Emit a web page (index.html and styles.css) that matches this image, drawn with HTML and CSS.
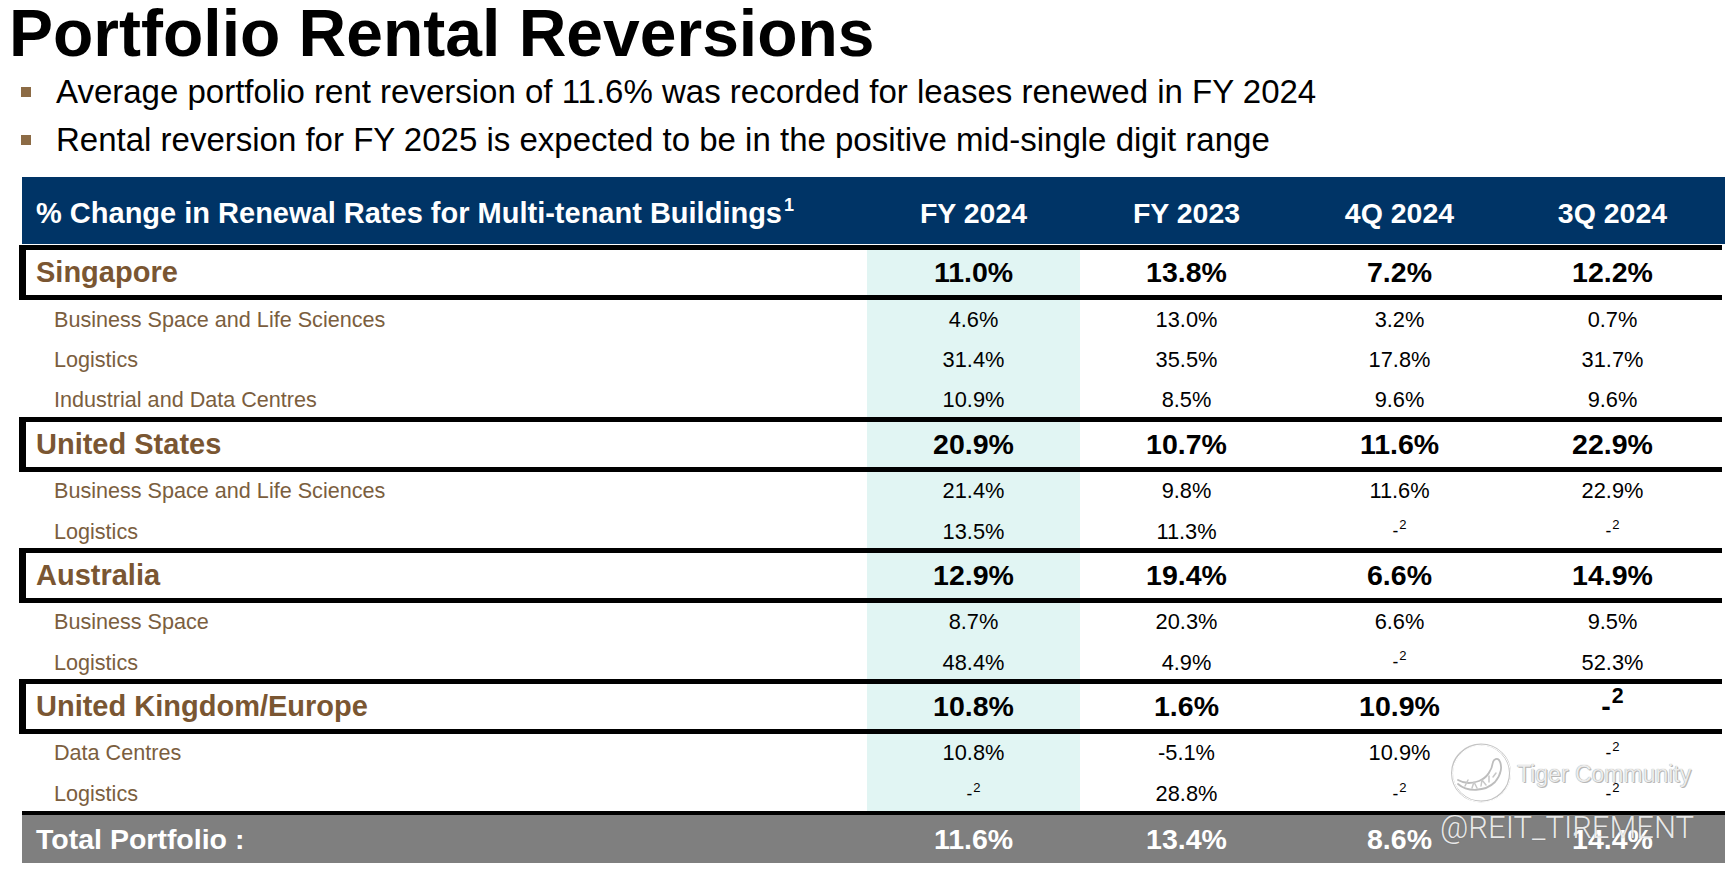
FILE: index.html
```html
<!DOCTYPE html>
<html lang="en">
<head>
<meta charset="utf-8">
<title>Portfolio Rental Reversions</title>
<link rel="stylesheet" href="styles.css">
</head>
<body>
<div class="slide">
  <h1 class="title">Portfolio Rental Reversions</h1>
  <ul class="bullets">
    <li>Average portfolio rent reversion of 11.6% was recorded for leases renewed in FY 2024</li>
    <li>Rental reversion for FY 2025 is expected to be in the positive mid-single digit range</li>
  </ul>

  <div class="table">
    <div class="row head">
      <div class="label">% Change in Renewal Rates for Multi-tenant Buildings<sup>1</sup></div>
      <div class="num">FY 2024</div>
      <div class="num">FY 2023</div>
      <div class="num">4Q 2024</div>
      <div class="num">3Q 2024</div>
    </div>

    <div class="row region">
      <div class="label">Singapore</div>
      <div class="num hl">11.0%</div><div class="num">13.8%</div><div class="num">7.2%</div><div class="num">12.2%</div>
    </div>
    <div class="row sub tall">
      <div class="label">Business Space and Life Sciences</div>
      <div class="num hl">4.6%</div><div class="num">13.0%</div><div class="num">3.2%</div><div class="num">0.7%</div>
    </div>
    <div class="row sub tall mid">
      <div class="label">Logistics</div>
      <div class="num hl">31.4%</div><div class="num">35.5%</div><div class="num">17.8%</div><div class="num">31.7%</div>
    </div>
    <div class="row sub tall last">
      <div class="label">Industrial and Data Centres</div>
      <div class="num hl">10.9%</div><div class="num">8.5%</div><div class="num">9.6%</div><div class="num">9.6%</div>
    </div>

    <div class="row region">
      <div class="label">United States</div>
      <div class="num hl">20.9%</div><div class="num">10.7%</div><div class="num">11.6%</div><div class="num">22.9%</div>
    </div>
    <div class="row sub">
      <div class="label">Business Space and Life Sciences</div>
      <div class="num hl">21.4%</div><div class="num">9.8%</div><div class="num">11.6%</div><div class="num">22.9%</div>
    </div>
    <div class="row sub last">
      <div class="label">Logistics</div>
      <div class="num hl">13.5%</div><div class="num">11.3%</div><div class="num"><span class="dash">-<sup>2</sup></span></div><div class="num"><span class="dash">-<sup>2</sup></span></div>
    </div>

    <div class="row region">
      <div class="label">Australia</div>
      <div class="num hl">12.9%</div><div class="num">19.4%</div><div class="num">6.6%</div><div class="num">14.9%</div>
    </div>
    <div class="row sub">
      <div class="label">Business Space</div>
      <div class="num hl">8.7%</div><div class="num">20.3%</div><div class="num">6.6%</div><div class="num">9.5%</div>
    </div>
    <div class="row sub last">
      <div class="label">Logistics</div>
      <div class="num hl">48.4%</div><div class="num">4.9%</div><div class="num"><span class="dash">-<sup>2</sup></span></div><div class="num">52.3%</div>
    </div>

    <div class="row region">
      <div class="label">United Kingdom/Europe</div>
      <div class="num hl">10.8%</div><div class="num">1.6%</div><div class="num">10.9%</div><div class="num"><span class="dash">-<sup>2</sup></span></div>
    </div>
    <div class="row sub">
      <div class="label">Data Centres</div>
      <div class="num hl">10.8%</div><div class="num">-5.1%</div><div class="num">10.9%</div><div class="num"><span class="dash">-<sup>2</sup></span></div>
    </div>
    <div class="row sub tall last">
      <div class="label">Logistics</div>
      <div class="num hl"><span class="dash">-<sup>2</sup></span></div><div class="num">28.8%</div><div class="num"><span class="dash">-<sup>2</sup></span></div><div class="num"><span class="dash">-<sup>2</sup></span></div>
    </div>

    <div class="row total">
      <div class="label">Total Portfolio :</div>
      <div class="num">11.6%</div><div class="num">13.4%</div><div class="num">8.6%</div><div class="num">14.4%</div>
    </div>
  </div>

  <div class="wm-logo">
    <svg width="64" height="62" viewBox="0 0 64 62" aria-hidden="true">
      <g fill="none" stroke-linecap="round" stroke-linejoin="round">
        <ellipse cx="32" cy="31" rx="29" ry="28.5" stroke="#c4c4c4" stroke-width="2"/>
        <ellipse cx="32.6" cy="31.6" rx="29" ry="28.5" stroke="#ffffff" stroke-width="1"/>
        <path d="M9 42 C18 50 36 50 46 40 C52 33 54 24 50 18 C48 16 45 17 44 20 C43 28 38 36 30 39 C22 42 14 41 9 38" stroke="#bdbdbd" stroke-width="1.8"/>
        <path d="M16 44 L19 38 M23 46 L25 40 L28 46 M32 44 L33 38 L37 43 M40 40 L40 34 M44 35 L47 31" stroke="#c8c8c8" stroke-width="1.5"/>
      </g>
    </svg>
    <span class="wm-name">Tiger Community</span>
  </div>
  <div class="wm-handle">@REIT_TIREMENT</div>
</div>
</body>
</html>
```

FILE: styles.css
```css
html, body {
  margin: 0;
  padding: 0;
  background: #ffffff;
}

body {
  width: 1730px;
  height: 870px;
  overflow: hidden;
  font-family: "Liberation Sans", Arial, sans-serif;
}

.slide {
  position: relative;
  width: 1730px;
  height: 870px;
}

.title {
  margin: 0;
  padding-left: 9px;
  font-size: 66px;
  line-height: 66px;
  font-weight: 700;
  color: #000000;
  letter-spacing: 0;
}

.bullets {
  list-style: none;
  margin: 2px 0 0 0;
  padding: 0;
}

.bullets li {
  display: flex;
  align-items: flex-start;
  font-size: 33px;
  line-height: 48px;
  color: #000000;
}

.bullets li::before {
  content: "";
  flex: none;
  width: 10px;
  height: 10px;
  margin: 19px 25px 0 21px;
  background: #8c6b45;
}

.table {
  margin: 13px 0 0 19px;
  width: 1706px;
}

.row {
  display: grid;
  grid-template-columns: 1fr repeat(4, 213px);
  padding-right: 6px;
  box-sizing: border-box;
}

.row .label {
  display: flex;
  align-items: center;
  white-space: nowrap;
}

.row .num {
  display: flex;
  align-items: center;
  justify-content: center;
  white-space: nowrap;
}

.head {
  margin: 0 0 1px 3px;
  height: 67px;
  padding-top: 6px;
  background: #003466;
  color: #ffffff;
  font-weight: 700;
}

.head .label {
  padding-left: 14px;
  font-size: 29px;
}

.head .num {
  font-size: 28.5px;
}

.head sup {
  font-size: 18px;
  line-height: 0;
  vertical-align: 0;
  position: relative;
  top: -9px;
  margin-left: 2px;
}

.region {
  height: 55px;
  border-top: 5px solid #000000;
  border-bottom: 5px solid #000000;
  border-left: 7px solid #000000;
  margin-right: 3px;
  padding-right: 3px;
  font-weight: 700;
}

.region .label {
  padding-left: 10px;
  font-size: 29px;
  color: #7a5632;
}

.region .num {
  font-size: 28.5px;
  color: #000000;
}

.sub {
  height: 38px;
}

.sub.tall {
  height: 39px;
}

.sub.mid {
  padding-top: 3px;
}

.sub.last {
  padding-top: 5px;
}

.sub .label {
  padding-left: 35px;
  font-size: 21.6px;
  color: #7b5e3e;
}

.sub .num {
  font-size: 21.8px;
  color: #000000;
}

.hl {
  background: #e1f5f3;
}

.sub.mid .hl,
.sub.last .hl {
  margin-top: -5px;
  padding-top: 5px;
}

.sub.mid .hl {
  margin-top: -3px;
  padding-top: 3px;
}

.dash {
  font-size: 0.8em;
}

.dash sup {
  font-size: 0.75em;
  line-height: 0;
  vertical-align: 0;
  position: relative;
  top: -0.6em;
  margin-left: 1px;
}

.region .dash {
  font-size: 1em;
}

.total {
  margin-left: 3px;
  height: 52px;
  border-top: 4px solid #000000;
  background: #7f7f7f;
  color: #ffffff;
  font-weight: 700;
}

.total .label {
  padding-left: 14px;
  font-size: 28.5px;
}

.total .num {
  font-size: 28.5px;
}

.wm-logo {
  position: absolute;
  left: 1449px;
  top: 742px;
  display: flex;
  align-items: center;
  gap: 4px;
}

.wm-name {
  font-size: 23px;
  color: #ececec;
  text-shadow: 0 0 1px #8a8a8a, 1px 1px 0 #bdbdbd;
  margin-top: 2px;
}

.wm-handle {
  position: absolute;
  left: 1440px;
  top: 810px;
  font-family: Roboto, "Liberation Sans", sans-serif;
  font-weight: 300;
  font-size: 31px;
  line-height: 36px;
  color: rgba(245, 245, 245, 0.92);
  text-shadow: 0 0 1px rgba(90, 90, 90, 0.6);
}
```
